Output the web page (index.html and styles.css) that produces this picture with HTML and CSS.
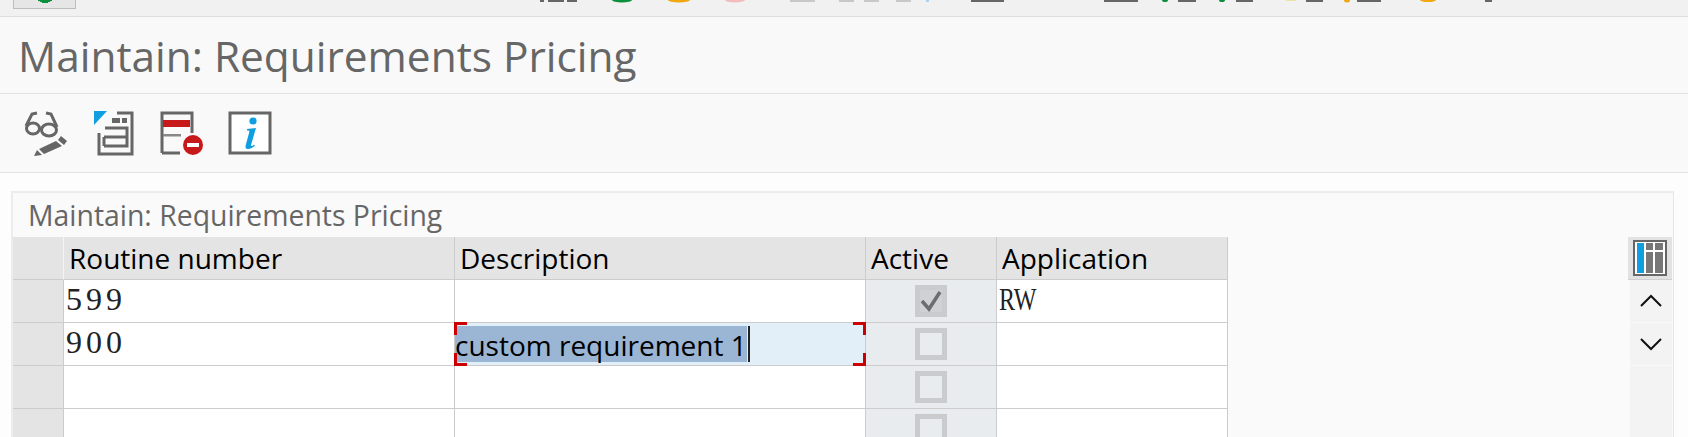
FILE: index.html
```html
<!DOCTYPE html>
<html lang="en">
<head>
    <meta charset="UTF-8">
    <title>Maintain: Requirements Pricing</title>
    <link rel="stylesheet" href="styles.css">
</head>
<body>
    <div class="top-bar">
        <div class="enter-button"></div>
        <svg class="top-icons" width="1688" height="4" viewBox="0 0 1688 4">
            <g fill="#666">
                <rect x="540" width="4" height="2"/><rect x="548" width="16" height="2"/><rect x="567" width="10" height="2"/>
                <rect x="971" width="33" height="2"/><rect x="1104" width="34" height="2"/><rect x="1178" width="18" height="2"/>
                <rect x="1236" width="17" height="2"/><rect x="1306" width="17" height="2"/><rect x="1357" width="24" height="2"/>
                <rect x="1485" width="7" height="2"/>
            </g>
            <g fill="#c8c8c8">
                <rect x="790" width="25" height="2"/><rect x="839" width="15" height="2"/><rect x="864" width="15" height="2"/><rect x="896" width="15" height="2"/>
            </g>
            <ellipse cx="622" cy="0" rx="10" ry="2.5" fill="#0a8f3c"/>
            <ellipse cx="679" cy="0" rx="11" ry="2.5" fill="#f0a810"/>
            <ellipse cx="735" cy="0" rx="10" ry="2.5" fill="#f2bcbc"/>
            <rect x="926" width="3" height="2" fill="#a9d3f0"/>
            <ellipse cx="1165" cy="0" rx="3" ry="2" fill="#0a8f3c"/>
            <ellipse cx="1222" cy="0" rx="3" ry="2" fill="#0a8f3c"/>
            <ellipse cx="1291" cy="0" rx="6" ry="1" fill="#e8e4a0"/>
            <ellipse cx="1347" cy="0" rx="3" ry="2.5" fill="#f0a810"/>
            <ellipse cx="1428" cy="0" rx="8" ry="2" fill="#f0a810"/>
        </svg>
    </div>

    <h1 class="page-title">Maintain: Requirements Pricing</h1>

    <div class="toolbar">
        <button class="tool-button" type="button">
            <svg width="44" height="46" viewBox="0 0 44 46">
                <g fill="none" stroke="#666" stroke-width="3">
                    <ellipse cx="9" cy="18.500" rx="6.500" ry="5.500"/>
                    <ellipse cx="25" cy="20" rx="7.500" ry="6"/>
                    <path d="M2 16L8 4l5-1M33 17L27 4l-5-1"/>
                </g>
                <path d="M37 26l6 5-3 4-6-5zM32 31l6 5-18 8-5-5z" fill="#666"/>
                <path d="M13 40l5 5-8 1z" fill="#666"/>
            </svg>
        </button>
        <button class="tool-button" type="button">
            <svg width="44" height="46" viewBox="0 0 44 46">
                <path d="M2 1h13L2 15z" fill="#0f9ee0"/>
                <path d="M25 3h15v41H7V23" fill="none" stroke="#666" stroke-width="3"/>
                <path d="M20 8h8v5h-8zM30 8h5v5h-5z" fill="#666"/>
                <path d="M13 18h22v18H12M12 27h23" fill="none" stroke="#666" stroke-width="3"/>
                <path d="M12 27v9" fill="none" stroke="#666" stroke-width="3"/>
            </svg>
        </button>
        <button class="tool-button" type="button">
            <svg width="44" height="46" viewBox="0 0 44 46">
                <path d="M2 43V3h30v20M2 43h18" fill="none" stroke="#666" stroke-width="3"/>
                <path d="M3 10h27v7H3z" fill="#c8191a"/>
                <path d="M3 24h18v2.500H3z" fill="#888"/>
                <circle cx="33" cy="35" r="10" fill="#c8191a"/>
                <rect x="27" y="33" width="12" height="4" fill="#fff"/>
            </svg>
        </button>
        <button class="tool-button" type="button">
            <svg width="44" height="46" viewBox="0 0 44 46">
                <rect x="2" y="3" width="40" height="40" fill="#fff" stroke="#666" stroke-width="3"/>
                <circle cx="25" cy="11" r="3.600" fill="#0f9ee0"/>
                <path d="M19 19l9-1-5 17c-.3 1.500.8 1.600 3-.4l.8 1.200c-3 3.400-10 5.200-9.300.2l3.800-14c.3-1.400-.6-1.600-2.300-1.500z" fill="#0f9ee0"/>
            </svg>
        </button>
    </div>

    <div class="content">
        <div class="panel">
            <div class="panel-title">Maintain: Requirements Pricing</div>
            <div class="panel-body">
                <div class="grid">
                    <div class="row-head head-corner"></div>
                    <div class="col-head">Routine number</div>
                    <div class="col-head">Description</div>
                    <div class="col-head">Active</div>
                    <div class="col-head">Application</div>

                    <div class="row-head"></div>
                    <div class="cell fixed">599</div>
                    <div class="cell"></div>
                    <div class="cell check-cell"><span class="checkbox checked">
                        <svg width="22" height="22" viewBox="0 0 22 22"><path d="M2 11l7 8L20 2" fill="none" stroke="#6b6d70" stroke-width="3.500"/></svg>
                    </span></div>
                    <div class="cell fixed"><span class="narrow">RW</span></div>

                    <div class="row-head"></div>
                    <div class="cell fixed">900</div>
                    <div class="cell editing"><span class="selection">custom requirement 1</span><span class="caret"></span></div>
                    <div class="cell check-cell"><span class="checkbox"></span></div>
                    <div class="cell"></div>

                    <div class="row-head"></div>
                    <div class="cell"></div>
                    <div class="cell"></div>
                    <div class="cell check-cell"><span class="checkbox"></span></div>
                    <div class="cell"></div>

                    <div class="row-head"></div>
                    <div class="cell"></div>
                    <div class="cell"></div>
                    <div class="cell check-cell"><span class="checkbox"></span></div>
                    <div class="cell"></div>
                </div>

                <div class="side-tools">
                    <div class="side-button config-button">
                        <svg width="34" height="36" viewBox="0 0 34 36">
                            <rect x="1" y="1" width="32" height="34" fill="#fff" stroke="#666" stroke-width="2"/>
                            <rect x="4" y="3" width="7" height="30" fill="#0f9ee0"/>
                            <rect x="13" y="3" width="7" height="7" fill="#777"/>
                            <rect x="22" y="3" width="8" height="7" fill="#777"/>
                            <rect x="13" y="12" width="7" height="21" fill="#777"/>
                            <rect x="22" y="12" width="8" height="21" fill="#777"/>
                        </svg>
                    </div>
                    <div class="side-button">
                        <svg width="22" height="14" viewBox="0 0 22 14"><path d="M1 12L11 2l10 10" fill="none" stroke="#111" stroke-width="2"/></svg>
                    </div>
                    <div class="side-button">
                        <svg width="22" height="14" viewBox="0 0 22 14"><path d="M1 2l10 10L21 2" fill="none" stroke="#111" stroke-width="2"/></svg>
                    </div>
                </div>
            </div>
        </div>
    </div>
</body>
</html>
```

FILE: styles.css
```css
html, body {
    margin: 0;
    padding: 0;
    height: 437px;
    overflow: hidden;
}

body {
    font-family: "Open Sans", Arial, sans-serif;
    background-color: #fdfdfd;
}

.top-bar {
    position: relative;
    height: 16px;
    background-color: #f1f1f1;
    border-bottom: 1px solid #dedede;
}

.top-icons {
    position: absolute;
    top: 0;
    left: 0;
}

.enter-button {
    position: absolute;
    top: 0;
    left: 13px;
    width: 61px;
    height: 8px;
    background: radial-gradient(circle 11px at 31px -8px, #0a8f3c 99%, transparent) #e6e6e6;
    border: 1px solid #bdbdbd;
    border-top: none;
}

.page-title {
    height: 76px;
    margin: 0;
    padding-left: 18px;
    background-color: #f9f9f9;
    border-bottom: 1px solid #e2e2e2;
    color: #666;
    font-size: 42.4px;
    font-weight: 400;
    line-height: 78px;
    white-space: nowrap;
}

.toolbar {
    display: flex;
    align-items: center;
    gap: 24px;
    height: 78px;
    padding-left: 24px;
    background-color: #f9f9f9;
    border-bottom: 1px solid #e2e2e2;
}

.tool-button {
    display: flex;
    width: 44px;
    height: 46px;
    padding: 0;
    border: none;
    background: none;
}

.content {
    padding: 18px 0 0 11px;
}

.panel {
    width: 1660px;
    height: 260px;
    background-color: #fafafa;
    border-top: 2px solid #ececec;
    border-left: 2px solid #ececec;
    border-right: 1px solid #e6e6e6;
}

.panel-title {
    height: 44px;
    padding-left: 15px;
    color: #666;
    font-size: 28.4px;
    line-height: 44px;
    white-space: nowrap;
}

.panel-body {
    display: flex;
    justify-content: space-between;
}

.grid {
    display: grid;
    grid-template-columns: 51px 391px 411px 131px 231px;
    grid-auto-rows: 43px;
}

.row-head {
    box-sizing: border-box;
    background-color: #e4e4e4;
    border-bottom: 1px solid #ccc;
    border-right: 1px solid #ccc;
}

.head-corner {
    border-right: 1px solid #f4f4f4;
}

.col-head {
    box-sizing: border-box;
    padding-left: 5px;
    background-color: #e4e4e4;
    border-bottom: 1px solid #ccc;
    border-right: 1px solid #ccc;
    color: #000;
    font-size: 28px;
    line-height: 43px;
    white-space: nowrap;
}

.cell {
    box-sizing: border-box;
    background-color: #fff;
    border-bottom: 1px solid #ccc;
    border-right: 1px solid #ccc;
    font-size: 28px;
}

.fixed {
    padding-left: 2px;
    color: #222;
    font-family: "Liberation Serif", serif;
    font-size: 32px;
    letter-spacing: 4px;
    line-height: 39px;
}

.narrow {
    display: inline-block;
    transform: scaleX(0.75);
    transform-origin: left;
    letter-spacing: 0;
}

.check-cell {
    display: flex;
    align-items: center;
    justify-content: center;
    background-color: #e8ecef;
    padding-bottom: 1px;
}

.checkbox {
    box-sizing: border-box;
    display: flex;
    align-items: center;
    justify-content: center;
    width: 32px;
    height: 32px;
    background-color: #e8ecef;
    border: 5px solid #c9cbcd;
}

.checked {
    background-color: #cfd1d3;
}

.editing {
    position: relative;
    display: flex;
    align-items: center;
    background-color: #e3eff8;
    color: #000;
}

.editing::before {
    content: "";
    position: absolute;
    top: -1px;
    left: -1px;
    right: -1px;
    bottom: -1px;
    background:
        linear-gradient(#c00, #c00) left top / 13px 3px,
        linear-gradient(#c00, #c00) left top / 3px 13px,
        linear-gradient(#c00, #c00) right top / 13px 3px,
        linear-gradient(#c00, #c00) right top / 3px 13px,
        linear-gradient(#c00, #c00) left bottom / 13px 3px,
        linear-gradient(#c00, #c00) left bottom / 3px 13px,
        linear-gradient(#c00, #c00) right bottom / 13px 3px,
        linear-gradient(#c00, #c00) right bottom / 3px 13px;
    background-repeat: no-repeat;
}

.selection {
    height: 36px;
    background-color: #9bb5d4;
    line-height: 38px;
    white-space: nowrap;
}

.caret {
    width: 2px;
    height: 36px;
    margin-left: 1px;
    background-color: #222;
}

.side-tools {
    display: flex;
    flex-direction: column;
    box-sizing: border-box;
    width: 44px;
    height: 200px;
    margin-right: 1px;
    background-color: #f3f3f3;
    border-left: 2px solid #fafafa;
}

.side-button {
    display: flex;
    align-items: center;
    justify-content: center;
    height: 42px;
    border-bottom: 1px solid #f9f9f9;
}

.config-button {
    margin-left: -2px;
    background-color: #e2e2e2;
    border-bottom: 1px solid #d0d0d0;
}
```
